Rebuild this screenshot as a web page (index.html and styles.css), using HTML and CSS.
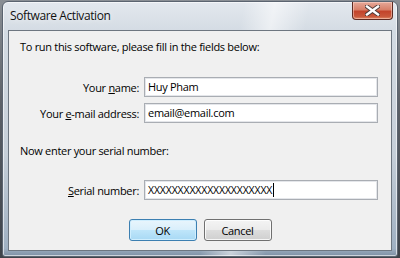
FILE: index.html
```html
<!DOCTYPE html>
<html>
<head>
<meta charset="utf-8">
<link rel="stylesheet" href="styles.css">
</head>
<body>
<div class="window">
  <div class="titlebar">
    <span class="title">Software Activation</span>
    <div class="close">
      <svg width="15" height="11" viewBox="0 0 15 11">
        <path d="M2 1.5 L13 9.5 M13 1.5 L2 9.5" stroke="#4a3a38" stroke-width="4.2" stroke-linecap="square"/>
        <path d="M2 1.5 L13 9.5 M13 1.5 L2 9.5" stroke="#ffffff" stroke-width="2.4" stroke-linecap="square"/>
      </svg>
    </div>
  </div>
  <div class="client">
    <p class="intro">To run this software, please fill in the fields below:</p>
    <div class="form first">
      <label class="lbl">Your <u>n</u>ame:</label>
      <div class="field">Huy Pham</div>
      <label class="lbl">Your <u>e</u>-mail address:</label>
      <div class="field">email@email.com</div>
    </div>
    <p class="intro second">Now enter your serial number:</p>
    <div class="form serial">
      <label class="lbl"><u>S</u>erial number:</label>
      <div class="field"><span class="caret">XXXXXXXXXXXXXXXXXXXXX</span></div>
    </div>
    <div class="buttons">
      <div class="btn default">OK</div>
      <div class="btn">Cancel</div>
    </div>
  </div>
</div>
</body>
</html>
```

FILE: styles.css
```css
html, body {
  margin: 0;
  padding: 0;
}
body {
  width: 400px;
  height: 258px;
  overflow: hidden;
  background: linear-gradient(180deg, #8a8f95 0%, #5c6168 40%, #3e434a 100%);
  font-family: "Open Sans", "Noto Sans", "Liberation Sans", sans-serif;
  font-size: 11px;
  letter-spacing: -0.3px;
  color: #000;
}
.window {
  box-sizing: border-box;
  margin: 1px 0 0 2px;
  width: 396px;
  height: 256px;
  border: 1px solid #5b6470;
  border-radius: 6px 6px 3px 3px;
  background:
    linear-gradient(100deg, rgba(255,255,255,0) 55%, rgba(255,255,255,0.55) 62%, rgba(255,255,255,0) 70%),
    linear-gradient(180deg, #e3e8ee 0%, #d3dbe3 12%, #c6cfd8 60%, #9fb0c2 97%, #7d8fa4 100%);
  padding: 0 5px 5px 5px;
  display: flex;
  flex-direction: column;
  box-shadow: inset 0 0 0 1px rgba(255,255,255,0.6);
}
.titlebar {
  height: 28px;
  display: flex;
  align-items: flex-start;
  justify-content: space-between;
  flex: none;
}
.title {
  margin: 6px 0 0 2px;
  line-height: 16px;
  font-size: 12px;
  letter-spacing: -0.4px;
  color: #111;
  text-shadow: 0 0 6px rgba(255,255,255,0.9);
}
.close {
  width: 41px;
  height: 18px;
  margin-right: -1px;
  box-sizing: border-box;
  border: 1px solid #5e2b22;
  border-top: none;
  border-radius: 0 0 4px 4px;
  background: linear-gradient(180deg, #e6a999 0%, #d88069 45%, #c3442b 55%, #c9583b 85%, #e08a66 100%);
  box-shadow: inset 0 0 0 1px rgba(255,220,210,0.5);
  display: flex;
  align-items: center;
  justify-content: center;
}
.client {
  flex: 1;
  box-sizing: border-box;
  background: #f0f0f0;
  border: 1px solid #6d7680;
  display: flex;
  flex-direction: column;
}
.intro {
  margin: 8px 0 0 11px;
  line-height: 15px;
}
.intro.second {
  margin-top: 20px;
}
.form {
  display: grid;
  grid-template-columns: 130px 234px;
  column-gap: 5px;
  row-gap: 6px;
  align-items: center;
}
.form.first {
  margin-top: 23px;
}
.form.serial {
  margin-top: 22px;
}
.lbl {
  text-align: right;
  line-height: 15px;
  white-space: nowrap;
}
.field {
  box-sizing: border-box;
  height: 20px;
  border: 1px solid #a9adb3;
  box-shadow: inset 0 0 0 1px #e4e6ea;
  background: #fff;
  padding: 0 3px;
  line-height: 18px;
  white-space: nowrap;
  overflow: hidden;
}
.caret {
  font-size: 10.5px;
  letter-spacing: -0.15px;
  border-right: 1px solid #000;
  padding-right: 1px;
}
.buttons {
  margin-top: 19px;
  display: flex;
  justify-content: center;
  gap: 7px;
}
.btn {
  box-sizing: border-box;
  width: 68px;
  height: 22px;
  border: 1px solid #707070;
  border-radius: 3px;
  background: linear-gradient(180deg, #f4f4f4 0%, #ebebeb 48%, #dddddd 52%, #cfcfcf 100%);
  box-shadow: inset 0 0 0 1px rgba(255,255,255,0.8);
  display: flex;
  align-items: center;
  justify-content: center;
  line-height: 15px;
}
.btn.default {
  border-color: #3c7fb1;
  background: linear-gradient(180deg, #e9f5fc 0%, #d9effb 48%, #bee5fa 52%, #a8d9f4 100%);
  box-shadow: inset 0 0 0 1px #cfeefe;
}
```
